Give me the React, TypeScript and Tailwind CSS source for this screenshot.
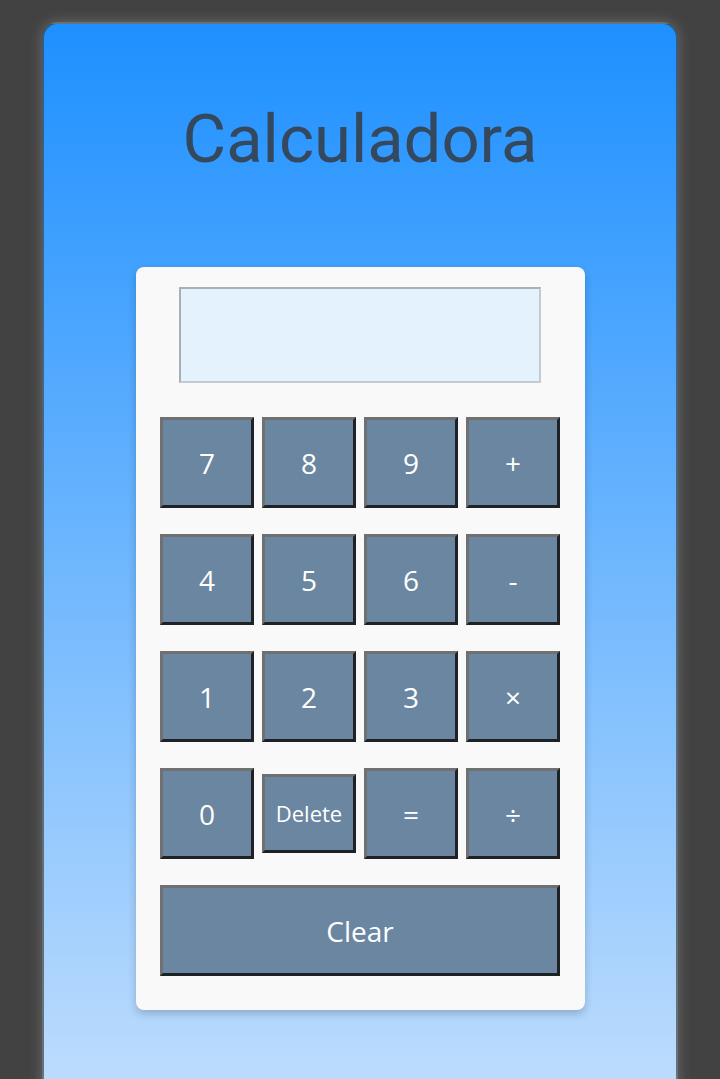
import React from "react";

const btnBase =
  "flex items-center justify-center text-white bg-[#6b86a0] border-[3px] border-t-[#707070] border-l-[#707070] border-b-[#1e2227] border-r-[#1e2227] font-['Open_Sans',sans-serif]";

function Btn({ label, small }: { label: string; small?: boolean }) {
  return (
    <button
      className={
        small
          ? btnBase + " w-[94px] h-[79px] text-[22px]"
          : btnBase + " w-[94px] h-[91px] text-[28px]"
      }
    >
      {label}
    </button>
  );
}

export default function App() {
  const rows = [
    ["7", "8", "9", "+"],
    ["4", "5", "6", "-"],
    ["1", "2", "3", "×"],
    ["0", "Delete", "=", "÷"],
  ];
  return (
    <div className="h-[1079px] w-[720px] overflow-hidden bg-[#424242] pt-[22px]">
      <div className="mx-[42px] h-[1100px] rounded-[16px] border-2 border-[rgba(68,68,68,0.7)] bg-[linear-gradient(180deg,#1e90ff_0px,#bcdcfd_1057px)] shadow-[0_0_14px_rgba(255,255,255,0.22)] pt-[78px]">
        <h1 className="text-center text-[67px] leading-[75px] text-[#34495e] font-['Roboto',sans-serif] font-normal">
          Calculadora
        </h1>
        <div className="mx-auto mt-[90px] w-[449px] rounded-[8px] bg-[#f9f9f9] pt-[20px] pb-[34px] shadow-[0_4px_8px_rgba(0,0,0,0.2)]">
          <div className="mx-auto h-[96px] w-[362px] border-2 border-t-[#a8afb6] border-l-[#a8afb6] border-b-[#c3cad1] border-r-[#c3cad1] bg-[#e3f2fd]" />
          <div className="mx-auto mt-[34px] flex w-[400px] flex-col gap-[26px]">
            {rows.map((r, i) => (
              <div key={i} className="flex h-[91px] items-center gap-[8px]">
                {r.map((l) => (
                  <Btn key={l} label={l} small={l === "Delete"} />
                ))}
              </div>
            ))}
            <button
              className={btnBase + " h-[91px] w-[400px] text-[28px]"}
            >
              Clear
            </button>
          </div>
        </div>
      </div>
    </div>
  );
}
